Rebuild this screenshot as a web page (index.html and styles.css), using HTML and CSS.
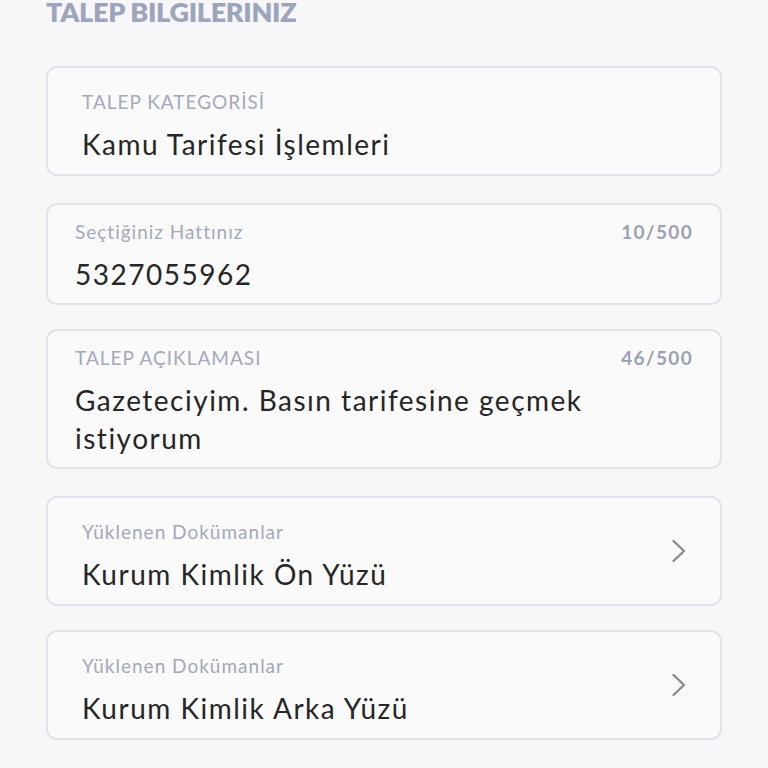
FILE: index.html
```html
<!DOCTYPE html>
<html lang="tr">

<head>
    <meta charset="UTF-8">
    <title>Talep Bilgileriniz</title>
    <link rel="stylesheet" href="styles.css">
</head>

<body>

    <div class="page">
        <h2 class="section-title">TALEP BILGILERINIZ</h2>

        <div class="field field-wide">
            <div class="field-label">TALEP KATEGORİSİ</div>
            <div class="field-value">Kamu Tarifesi İşlemleri</div>
        </div>

        <div class="field field-input">
            <div class="field-head">
                <span class="field-label">Seçtiğiniz Hattınız</span>
                <span class="counter">10/500</span>
            </div>
            <div class="field-value">5327055962</div>
        </div>

        <div class="field field-input field-close">
            <div class="field-head">
                <span class="field-label">TALEP AÇIKLAMASI</span>
                <span class="counter">46/500</span>
            </div>
            <div class="field-value">Gazeteciyim. Basın tarifesine geçmek istiyorum</div>
        </div>

        <div class="field field-wide field-link">
            <div class="field-text">
                <div class="field-label">Yüklenen Dokümanlar</div>
                <div class="field-value">Kurum Kimlik Ön Yüzü</div>
            </div>
            <svg class="chevron" width="16" height="24" viewBox="0 0 16 24">
                <path d="M2.5 2 L13 12 L2.5 22" fill="none" stroke="#8c8c8c" stroke-width="2.4" stroke-linecap="round" stroke-linejoin="round" />
            </svg>
        </div>

        <div class="field field-wide field-link field-close">
            <div class="field-text">
                <div class="field-label">Yüklenen Dokümanlar</div>
                <div class="field-value">Kurum Kimlik Arka Yüzü</div>
            </div>
            <svg class="chevron" width="16" height="24" viewBox="0 0 16 24">
                <path d="M2.5 2 L13 12 L2.5 22" fill="none" stroke="#8c8c8c" stroke-width="2.4" stroke-linecap="round" stroke-linejoin="round" />
            </svg>
        </div>
    </div>

</body>

</html>
```

FILE: styles.css
```css
* {
    margin: 0;
    padding: 0;
    box-sizing: border-box;
}

body {
    background: #f7f7f9;
    font-family: "Lato", "Noto Sans", sans-serif;
    color: #262626;
}

.page {
    padding: 0 46px;
    display: flex;
    flex-direction: column;
    gap: 27px;
}

.section-title {
    margin-top: -5px;
    margin-bottom: 10px;
    font-size: 27px;
    font-weight: 800;
    line-height: 34px;
    color: #9ca5bb;
    letter-spacing: -0.3px;
}

.field {
    background: #fafafb;
    border: 2px solid #e1e3ea;
    border-radius: 11px;
}

/* a bit less space above some cards */
.field-close {
    margin-top: -3px;
}

.field-wide {
    padding: 22px 34px 11px 34px;
}

.field-input {
    padding: 15px 27px 10px 27px;
}

.field-head {
    display: flex;
    justify-content: space-between;
    align-items: center;
}

.field-label {
    font-size: 19px;
    line-height: 24px;
    color: #a3a9ba;
    letter-spacing: 1px;
}

.counter {
    font-size: 19px;
    line-height: 24px;
    font-weight: 700;
    color: #9aa1b1;
    letter-spacing: 1.3px;
}

.field-value {
    margin-top: 11px;
    font-size: 28px;
    line-height: 38px;
    color: #262626;
    letter-spacing: 1.5px;
}

.field-link {
    display: flex;
    align-items: center;
    justify-content: space-between;
}

.chevron {
    margin-top: -12px;
    margin-right: -1px;
    flex-shrink: 0;
}
```
